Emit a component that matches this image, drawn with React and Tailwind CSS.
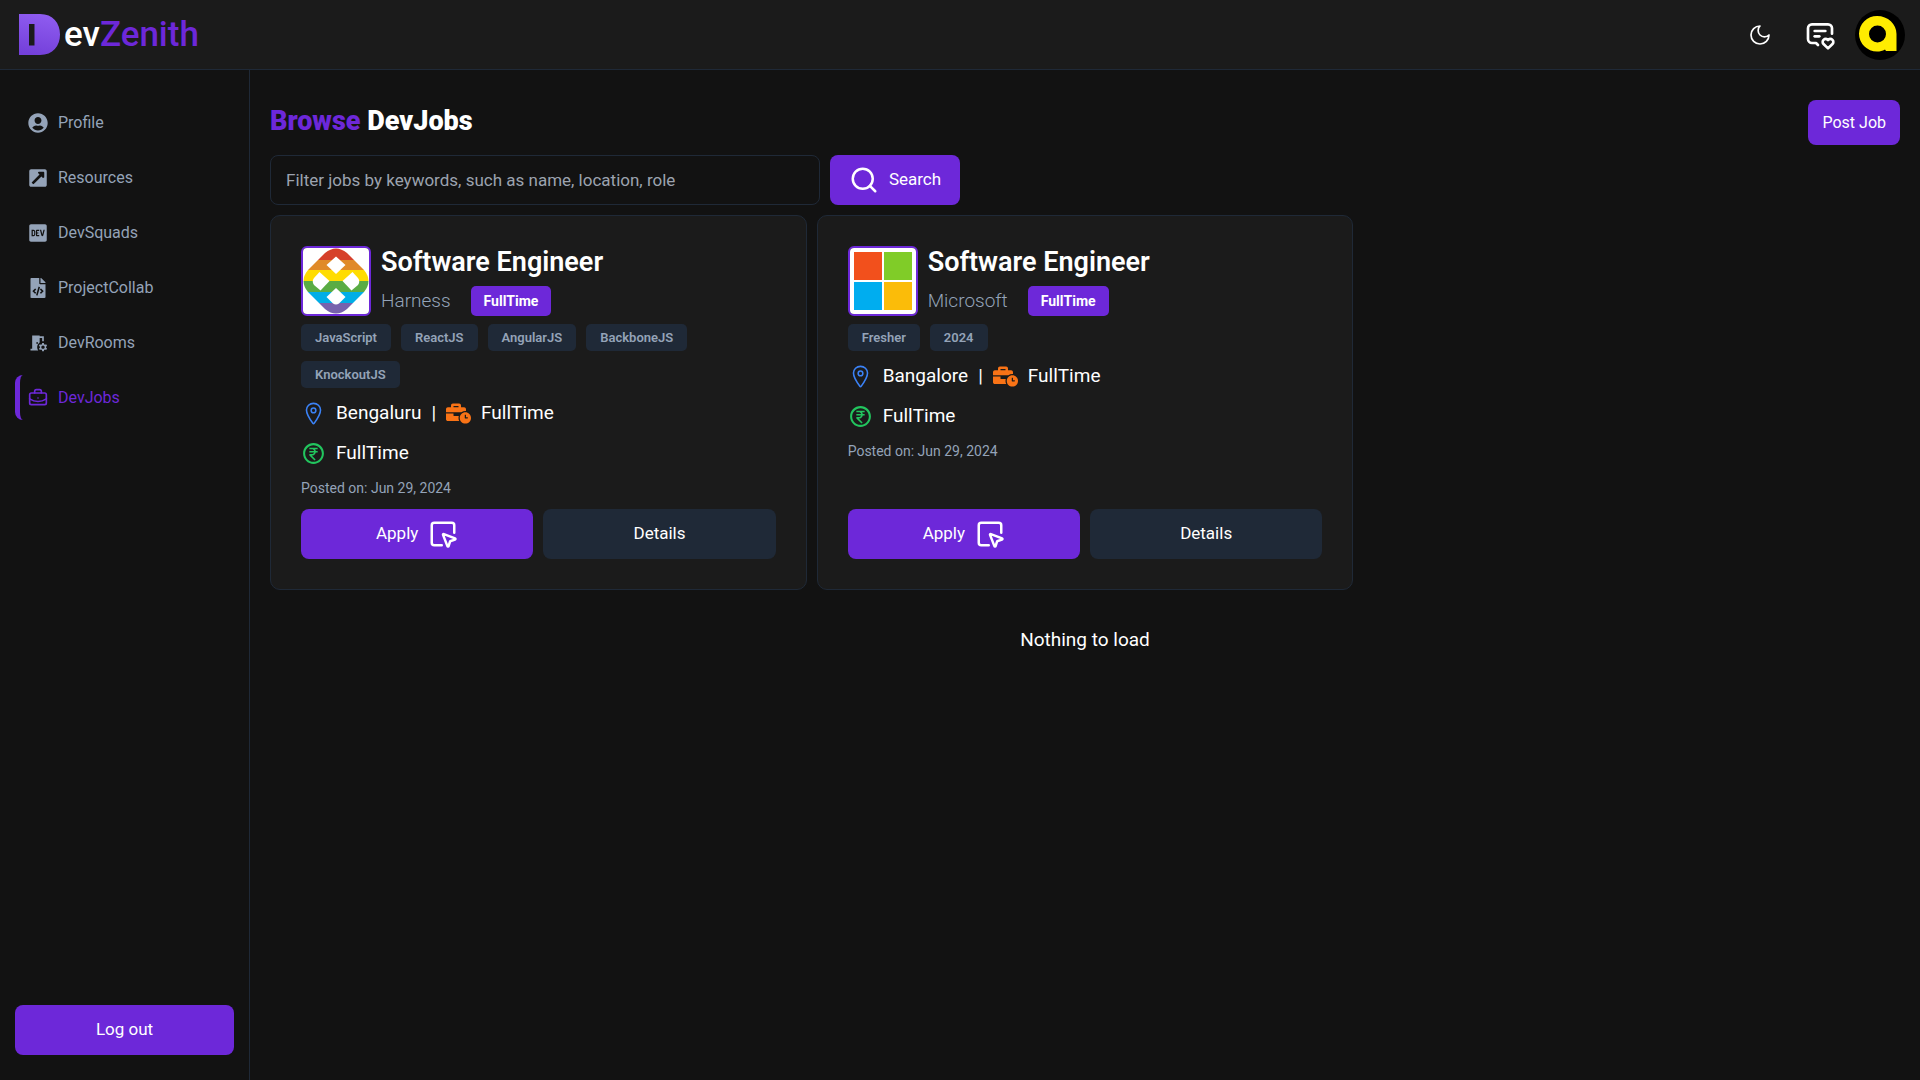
import { FaUserCircle, FaExternalLinkSquareAlt, FaDev, FaFileCode, FaBusinessTime } from 'react-icons/fa';
import { MdRoomPreferences } from 'react-icons/md';
import { LuBriefcaseBusiness, LuSearch, LuSquareMousePointer } from 'react-icons/lu';
import { TbMessage2Heart } from 'react-icons/tb';
import { IoLocationOutline } from 'react-icons/io5';
import { RiMoneyRupeeCircleLine } from 'react-icons/ri';

const navItems = [
  { label: 'Profile', Icon: FaUserCircle },
  { label: 'Resources', Icon: FaExternalLinkSquareAlt },
  { label: 'DevSquads', Icon: FaDev },
  { label: 'ProjectCollab', Icon: FaFileCode },
  { label: 'DevRooms', Icon: MdRoomPreferences },
  { label: 'DevJobs', Icon: LuBriefcaseBusiness, active: true },
];

const jobs = [
  {
    title: 'Software Engineer',
    company: 'Harness',
    Logo: HarnessLogo,
    tags: ['JavaScript', 'ReactJS', 'AngularJS', 'BackboneJS', 'KnockoutJS'],
    location: 'Bengaluru',
  },
  {
    title: 'Software Engineer',
    company: 'Microsoft',
    Logo: MicrosoftLogo,
    tags: ['Fresher', '2024'],
    location: 'Bangalore',
  },
];

function HarnessLogo() {
  return (
    <svg viewBox="0 0 66 66" className="size-full" role="img" aria-label="Harness">
      <defs>
        <clipPath id="harness-shape">
          <path d="M22 5Q33-4 44 5L61 22Q70 33 61 44L44 61Q33 70 22 61L5 44Q-4 33 5 22Z" />
        </clipPath>
      </defs>
      <rect width="66" height="66" fill="#fff" />
      <g clipPath="url(#harness-shape)">
        <rect width="66" height="12" fill="#d6402b" />
        <rect y="12" width="66" height="10" fill="#e08a28" />
        <rect y="22" width="66" height="11" fill="#ffdc00" />
        <rect y="33" width="66" height="11" fill="#5aac44" />
        <rect y="44" width="66" height="11" fill="#00aee6" />
        <rect y="55" width="66" height="11" fill="#7762ad" />
      </g>
      <g fill="#fff">
        <path d="M33 8.500 42.500 17 33 26 23.500 17Z" />
        <path d="M16.500 24 26.500 33 17.500 42.500 11 37Q8.500 33.500 11 30Z" />
        <path d="M49.500 24 39.500 33 48.500 42.500 55 37Q57.500 33.500 55 30Z" />
        <path d="M33 40 42.500 49 36 55.500Q33 57.500 30 55.500L23.500 49Z" />
      </g>
    </svg>
  );
}

function MicrosoftLogo() {
  return (
    <svg viewBox="0 0 66 66" className="size-full" role="img" aria-label="Microsoft">
      <rect width="66" height="66" fill="#fff" />
      <rect x="4" y="4" width="28" height="28" fill="#f2501c" />
      <rect x="34" y="4" width="28" height="28" fill="#80cc28" />
      <rect x="4" y="34" width="28" height="28" fill="#00adef" />
      <rect x="34" y="34" width="28" height="28" fill="#fbbc09" />
    </svg>
  );
}

function BrandMark() {
  return (
    <svg viewBox="0 0 41 41" className="size-[41px]" aria-hidden="true">
      <defs>
        <linearGradient id="brand-fill" x1="0.6" y1="0" x2="0.4" y2="1">
          <stop offset="0" stopColor="#8f5cf0" />
          <stop offset="1" stopColor="#7440da" />
        </linearGradient>
      </defs>
      <path
        fill="url(#brand-fill)"
        fillRule="evenodd"
        d="M0 0H21C34 0 41 9 41 20.500S34 41 21 41H0ZM10 10V31.500H15.500V10Z"
      />
    </svg>
  );
}

function MoonIcon() {
  return (
    <svg viewBox="0 0 24 24" className="size-6" fill="none" stroke="currentColor" strokeWidth="1.7" strokeLinecap="round" strokeLinejoin="round" aria-hidden="true">
      <path d="M12 3a6 6 0 0 0 9 9 9 9 0 1 1-9-9Z" />
    </svg>
  );
}

function Avatar() {
  return (
    <svg viewBox="0 0 50 50" className="size-[50px] rounded-full" role="img" aria-label="Account">
      <rect width="50" height="50" fill="#000" />
      <path fill="#ffec00" fillRule="evenodd" d="M22 6C33 6 41.500 14 41.500 24V41H31L30 39.500C27.500 41 25 41.500 22 41.500A18 17.750 0 0 1 22 6ZM22.500 15.500A8.500 8.500 0 1 0 22.500 32.500 8.500 8.500 0 0 0 22.500 15.500Z" />
    </svg>
  );
}

function JobCard({ title, company, Logo, tags, location }) {
  return (
    <article className="flex flex-col justify-between rounded-[10px] border border-[#1f2937] bg-[#1b1b1b] p-[30px]">
      <div>
        <div className="flex gap-[10px]">
          <div className="size-[70px] shrink-0 overflow-hidden rounded-md border-2 border-[#6d28d9]">
            <Logo />
          </div>
          <div className="flex flex-col justify-between">
            <h2 className="text-[27px] leading-8 font-semibold text-white">{title}</h2>
            <div className="flex items-center gap-5">
              <p className="text-[19px] leading-[30px] font-light text-[#94a3b8]">{company}</p>
              <span className="rounded-[5px] bg-[#6d28d9] px-[13px] text-[14px] leading-[30px] font-bold text-white">FullTime</span>
            </div>
          </div>
        </div>
        <ul className="mt-2 flex flex-wrap gap-[10px]">
          {tags.map((tag) => (
            <li key={tag} className="rounded-[5px] bg-[#1f2937] px-[14px] text-[13px] leading-[27px] font-semibold text-[#94a3b8]">{tag}</li>
          ))}
        </ul>
        <div className="mt-[10px] flex h-[30px] items-center gap-[10px] text-[19px] text-white">
          <IoLocationOutline className="size-[25px] text-[#3b82f6]" />
          <span>{location}</span>
          <span>|</span>
          <FaBusinessTime className="size-[25px] text-[#f97316]" />
          <span>FullTime</span>
        </div>
        <div className="mt-[10px] flex h-[30px] items-center gap-[10px] text-[19px] text-white">
          <RiMoneyRupeeCircleLine className="size-[25px] text-[#22c55e]" />
          <span>FullTime</span>
        </div>
        <p className="my-[10px] text-[14px] leading-[21px] text-[#94a3b8]">Posted on: Jun 29, 2024</p>
      </div>
      <div className="grid grid-cols-2 gap-[10px] text-[17px] text-white">
        <button type="button" className="flex h-[50px] items-center justify-center gap-[10px] rounded-lg bg-[#6d28d9]">
          Apply
          <LuSquareMousePointer className="size-[30px]" />
        </button>
        <button type="button" className="h-[50px] rounded-lg bg-[#1f2937]">Details</button>
      </div>
    </article>
  );
}

export default function App() {
  return (
    <div className="flex min-h-screen flex-col bg-[#121212] font-['Roboto',sans-serif]">
      <header className="flex h-[70px] items-center justify-between border-b border-[#1f2937] bg-[#1b1b1b] pr-[15px] pl-[19px]">
        <a href="#" className="flex items-center gap-1 text-[35px] leading-none font-medium">
          <BrandMark />
          <span className="text-white">
            ev<span className="text-[#6d28d9]">Zenith</span>
          </span>
        </a>
        <div className="flex items-center text-white">
          <button type="button" aria-label="Toggle theme" className="mr-8">
            <MoonIcon />
          </button>
          <button type="button" aria-label="Messages" className="mr-[19px]">
            <TbMessage2Heart className="size-8" />
          </button>
          <button type="button">
            <Avatar />
          </button>
        </div>
      </header>

      <div className="flex grow">
        <aside className="flex w-[250px] shrink-0 flex-col justify-between border-r border-[#1f2937] px-[15px] pt-[30px] pb-[25px]">
          <nav className="flex flex-col gap-[10px]">
            {navItems.map(({ label, Icon, active }) => (
              <a
                key={label}
                href="#"
                className={`flex h-[45px] items-center gap-[10px] rounded-lg border-l-[5px] pl-2 text-[16px] ${
                  active ? 'border-[#6d28d9] text-[#6d28d9]' : 'border-transparent text-[#94a3b8]'
                }`}
              >
                <Icon className="size-5" />
                {label}
              </a>
            ))}
          </nav>
          <button type="button" className="h-[50px] rounded-lg bg-[#6d28d9] text-[17px] text-white">Log out</button>
        </aside>

        <main className="min-w-0 grow px-5 pt-[30px]">
          <div className="flex items-start justify-between">
            <h1 className="text-[27px] leading-[42px] font-black text-white">
              <span className="text-[#6d28d9]">Browse</span> DevJobs
            </h1>
            <button type="button" className="h-[45px] rounded-lg bg-[#6d28d9] px-[14px] text-[16px] text-white">Post Job</button>
          </div>

          <form className="mt-[10px] flex gap-[10px]">
            <input
              type="text"
              aria-label="Filter jobs"
              placeholder="Filter jobs by keywords, such as name, location, role"
              className="h-[50px] w-[550px] rounded-lg border border-[#1f2937] bg-transparent px-[15px] text-[17px] text-white placeholder:text-[#9ca3af]"
            />
            <button type="button" className="flex h-[50px] w-[130px] items-center justify-center gap-[10px] rounded-lg bg-[#6d28d9] text-[17px] text-white">
              <LuSearch className="size-[30px]" />
              Search
            </button>
          </form>

          <section className="mt-[10px] grid grid-cols-3 gap-[10px]">
            {jobs.map((job) => (
              <JobCard key={job.company} {...job} />
            ))}
          </section>

          <p className="mt-9 text-center text-[19px] leading-7 text-white">Nothing to load</p>
        </main>
      </div>
    </div>
  );
}
